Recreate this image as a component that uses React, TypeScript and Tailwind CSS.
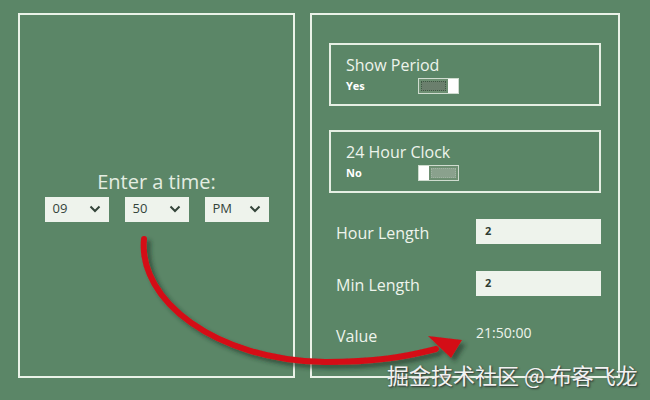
import React from 'react';

const font = { fontFamily: '"Open Sans", "Noto Sans", sans-serif' };

function Dropdown({ value }: { value: string }) {
  return (
    <div className="flex items-center justify-between w-[64px] h-[25px] bg-[#eef3ec] pl-[8px] pr-[8px] text-[13px] text-[#34443a]">
      <span>{value}</span>
      <svg width="12" height="8" viewBox="0 0 12 8">
        <path d="M1.5 1.5 L6 6 L10.5 1.5" fill="none" stroke="#34443a" strokeWidth="2" />
      </svg>
    </div>
  );
}

function Toggle({ on }: { on: boolean }) {
  return (
    <div className="flex w-[41px] h-[16px] border border-[#cfdccf] bg-[#6d8f72]">
      {on ? (
        <>
          <div className="flex-1 m-[2px] border border-dotted border-[#3d5a42] bg-[#6b7f6d]" />
          <div className="w-[10px] bg-white" />
        </>
      ) : (
        <>
          <div className="w-[10px] bg-white" />
          <div className="flex-1 m-[2px] border border-dotted border-[#9fb3a2] bg-[#8aa18d]" />
        </>
      )}
    </div>
  );
}

function OptionBox({ title, label, on }: { title: string; label: string; on: boolean }) {
  return (
    <div className="h-[63px] border-2 border-[#e6efe4] pl-[15px] pt-[10px]">
      <div className="text-[16px] leading-[20px] text-[#eef4ec]">{title}</div>
      <div className="flex items-center mt-[3px]">
        <span className="w-[72px] text-[11px] font-bold text-white">{label}</span>
        <Toggle on={on} />
      </div>
    </div>
  );
}

function Field({ label, value }: { label: string; value: string }) {
  return (
    <div className="flex items-center h-[25px]">
      <span className="w-[140px] text-[16px] text-[#eef4ec] mt-[3px]">{label}</span>
      <div className="w-[125px] h-[25px] bg-[#eef3ec] pl-[9px] flex items-center text-[11px] font-bold text-[#2f3d31]">
        {value}
      </div>
    </div>
  );
}

export default function App() {
  return (
    <div className="relative w-[650px] h-[400px] bg-[#5b8667] overflow-hidden" style={font}>
      <div className="flex gap-[15px] pl-[18px] pt-[13px]">
        <div className="w-[277px] h-[365px] border-2 border-[#eaf2e8] flex flex-col items-center justify-center">
          <div className="text-[20px] leading-[24px] text-[#e4ede2] mb-[3px]">Enter a time:</div>
          <div className="flex gap-[16px]">
            <Dropdown value="09" />
            <Dropdown value="50" />
            <Dropdown value="PM" />
          </div>
        </div>
        <div className="w-[310px] h-[365px] border-2 border-[#eaf2e8] pl-[17px] pr-[17px] pt-[28px]">
          <div className="flex flex-col gap-[24px] w-[272px]">
            <OptionBox title="Show Period" label="Yes" on={true} />
            <OptionBox title="24 Hour Clock" label="No" on={false} />
          </div>
          <div className="flex flex-col gap-[27px] mt-[26px] pl-[7px]">
            <Field label="Hour Length" value="2" />
            <Field label="Min Length" value="2" />
            <div className="flex items-center h-[25px]">
              <span className="w-[140px] text-[16px] text-[#eef4ec]">Value</span>
              <span className="text-[14px] text-[#eef4ec] mb-[6px]">21:50:00</span>
            </div>
          </div>
        </div>
      </div>

      <svg className="absolute left-0 top-0" width="650" height="400" viewBox="0 0 650 400">
        <defs>
          <filter id="sh" x="-10%" y="-10%" width="130%" height="130%">
            <feDropShadow dx="4" dy="4" stdDeviation="2" floodColor="#1f3325" floodOpacity="0.6" />
          </filter>
        </defs>
        <g filter="url(#sh)">
          <path
            d="M144 239 C 138 300, 215 360, 325 362 C 375 362, 405 357, 436 349"
            fill="none"
            stroke="#d40d16"
            strokeWidth="6"
            strokeLinecap="round"
          />
          <polygon points="428,336 462,340 451,358" fill="#d40d16" />
        </g>
      </svg>

      <div
        className="absolute left-[387px] top-[360px] text-[22px] leading-[28px] text-[#f2f2f2]"
        style={{ fontFamily: '"Noto Sans CJK SC", sans-serif', textShadow: '1px 1px 2px #2a2a2a' }}
      >
        掘金技术社区 @ 布客飞龙
      </div>
    </div>
  );
}
